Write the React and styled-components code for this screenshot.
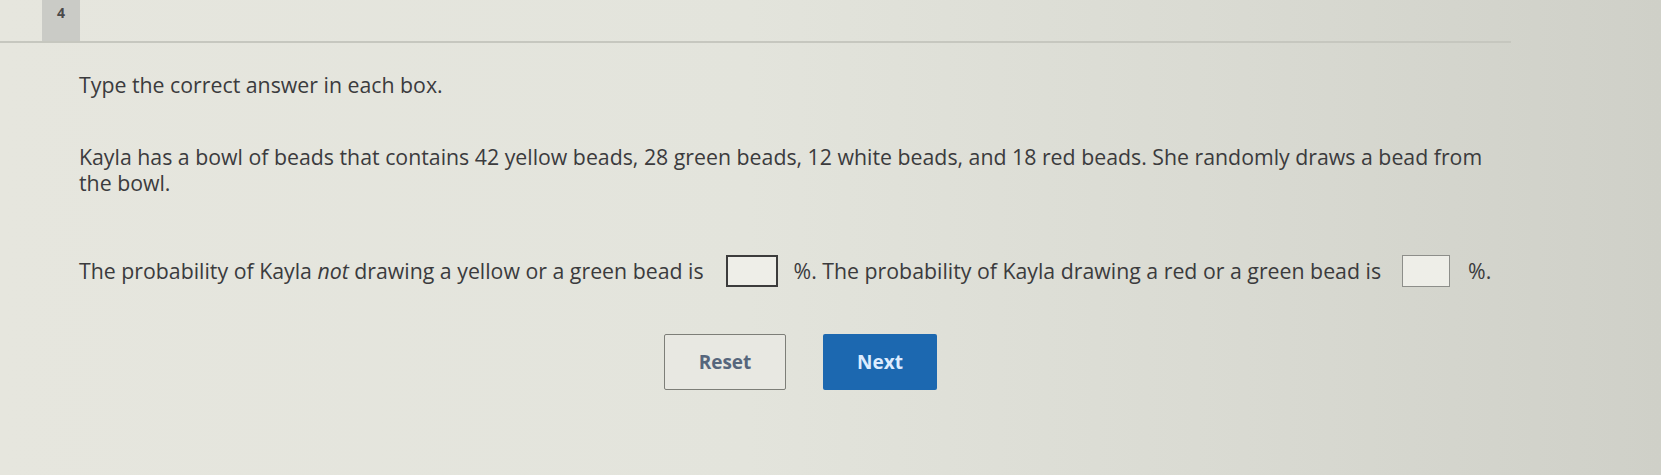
import React from 'react';
import styled, { createGlobalStyle } from 'styled-components';

const GlobalStyle = createGlobalStyle`
    html, body {
        margin: 0;
        padding: 0;
    }
    body {
        width: 1661px;
        height: 475px;
        overflow: hidden;
        font-family: "Open Sans", "Liberation Sans", sans-serif;
        background: linear-gradient(90deg, #e6e6de 0%, #e3e4dc 45%, #d9dad2 75%, #cfd0c8 100%);
    }
`;

const Page = styled.div`
    width: 1661px;
    height: 475px;
    display: flex;
    flex-direction: column;
`;

const TopBar = styled.div`
    display: flex;
    padding-left: 42px;
    border-bottom: 2px solid #c6c7bf;
    margin-right: 150px;
`;

const NumberBadge = styled.div`
    width: 38px;
    height: 41px;
    background: #cacbc6;
    color: #4a4a4a;
    font-size: 14px;
    font-weight: 700;
    display: flex;
    justify-content: center;
    padding-top: 3px;
    box-sizing: border-box;
`;

const Content = styled.div`
    padding: 29px 0 0 79px;
    color: #3b3b3d;
    font-size: 21.3px;
`;

const Instruction = styled.p`
    margin: 0 0 46px;
    line-height: 26px;
`;

const Paragraph = styled.p`
    margin: 0;
    line-height: 26px;
    width: 1420px;
`;

const Sentence = styled.p`
    margin: 58px 0 0;
    line-height: 34px;
    display: flex;
    align-items: center;
    white-space: pre;
`;

const AnswerBox = styled.span`
    display: inline-block;
    width: ${p => p.width}px;
    height: 32px;
    border: ${p => p.dark ? '2px solid #3c3c3c' : '1px solid #8d8e8a'};
    background: #eeeee8;
    margin: 0 ${p => p.gap}px 0 ${p => p.lead}px;
    box-sizing: border-box;
`;

const Buttons = styled.div`
    display: flex;
    gap: 37px;
    margin: 46px 0 0 585px;
`;

const Button = styled.button`
    width: ${p => p.width}px;
    height: 56px;
    font-family: "Open Sans", "Liberation Sans", sans-serif;
    font-size: 19px;
    font-weight: 700;
    border-radius: 2px;
    cursor: pointer;
    border: ${p => p.primary ? 'none' : '1px solid #7d7e78'};
    background: ${p => p.primary ? '#1c68b0' : '#e8e8e2'};
    color: ${p => p.primary ? '#dcecff' : '#56667c'};
`;

const App = () => {
    return (
        <Page>
            <GlobalStyle />
            <TopBar>
                <NumberBadge>4</NumberBadge>
            </TopBar>
            <Content>
                <Instruction>Type the correct answer in each box.</Instruction>
                <Paragraph>
                    Kayla has a bowl of beads that contains 42 yellow beads, 28 green beads, 12 white beads, and 18 red beads. She randomly draws a bead from the bowl.
                </Paragraph>
                <Sentence>
                    The probability of Kayla <em>not</em> drawing a yellow or a green bead is
                    <AnswerBox dark width={52} lead={22} gap={16} />
                    %. The probability of Kayla drawing a red or a green bead is
                    <AnswerBox width={48} lead={21} gap={18} />
                    %.
                </Sentence>
                <Buttons>
                    <Button width={122}>Reset</Button>
                    <Button primary width={114}>Next</Button>
                </Buttons>
            </Content>
        </Page>
    )
}

export default App
